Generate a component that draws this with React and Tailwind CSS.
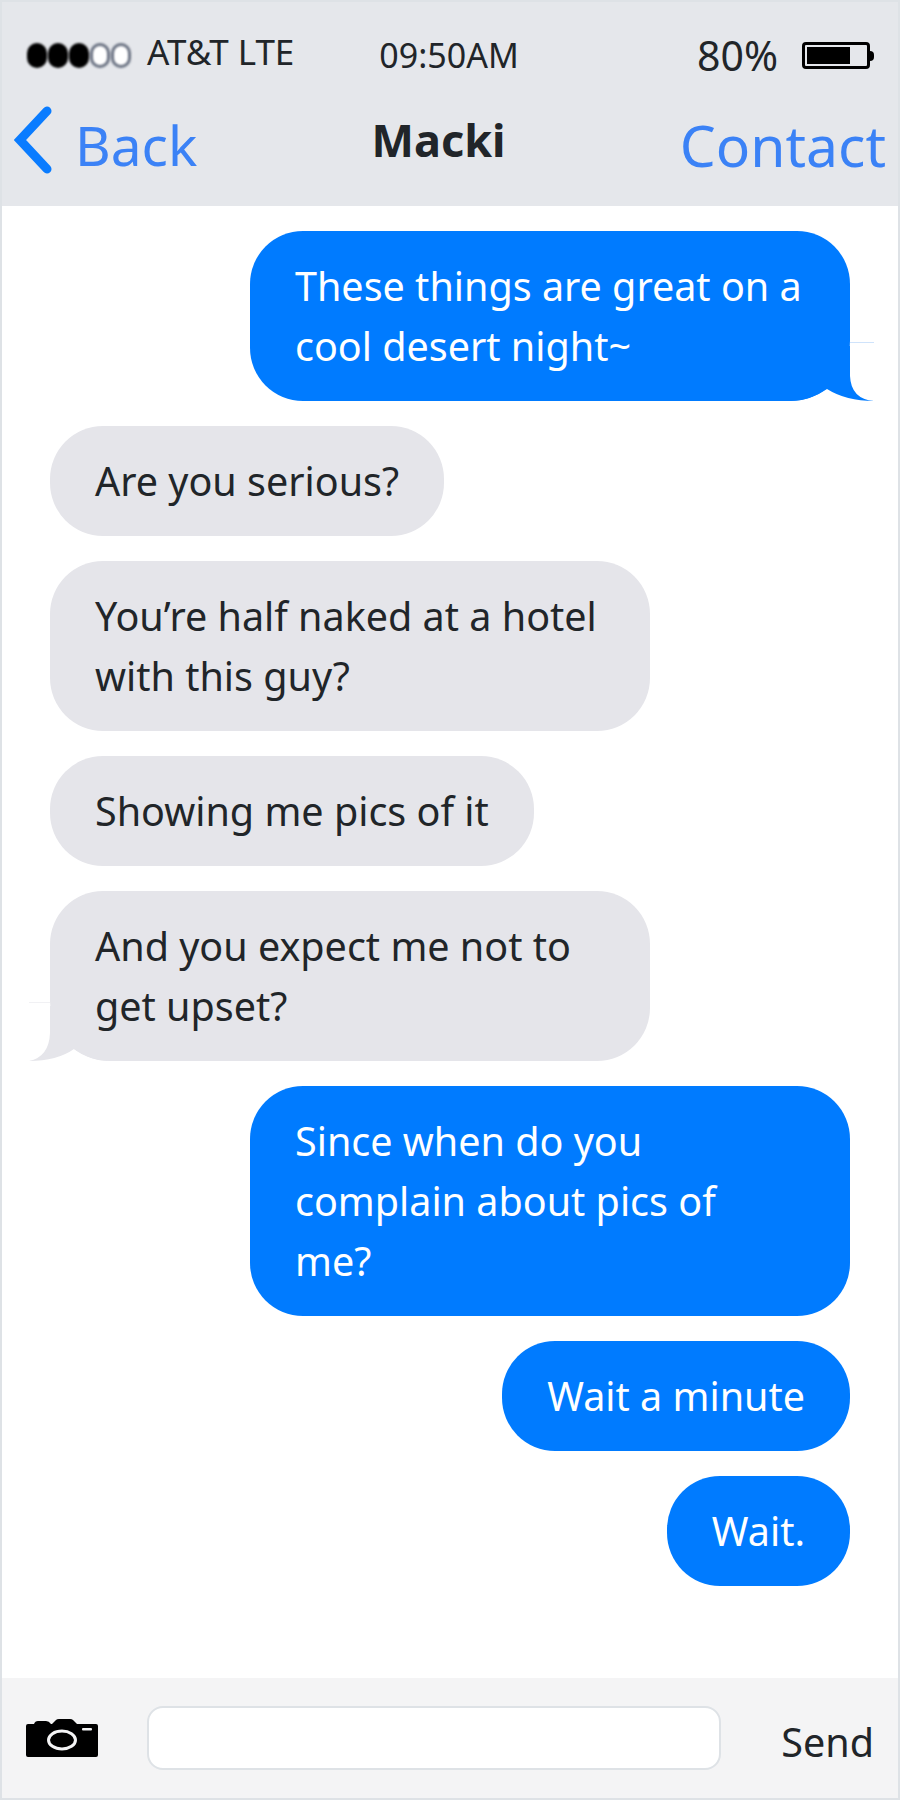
import React from 'react'

const messages = [
  { id: 1, text: ['These things are great on a', 'cool desert night~'], mine: true, tail: true, w: 'w-[600px]' },
  { id: 2, text: ['Are you serious?'], mine: false },
  { id: 3, text: ['You’re half naked at a hotel', 'with this guy?'], mine: false, w: 'w-[600px]' },
  { id: 4, text: ['Showing me pics of it'], mine: false },
  { id: 5, text: ['And you expect me not to', 'get upset?'], mine: false, tail: true, w: 'w-[600px]' },
  { id: 6, text: ['Since when do you', 'complain about pics of', 'me?'], mine: true, w: 'w-[600px]' },
  { id: 7, text: ['Wait a minute'], mine: true },
  { id: 8, text: ['Wait.'], mine: true },
]

function SignalDots() {
  return (
    <div className="flex gap-[1px] blur-[1px]">
      {[0, 1, 2, 3, 4].map((i) => (
        <span
          key={i}
          className={
            i < 3
              ? 'w-[20px] h-[25px] rounded-full bg-black'
              : 'w-[20px] h-[25px] rounded-full bg-white border-[3px] border-gray-500'
          }
        />
      ))}
    </div>
  )
}

function Battery() {
  return (
    <div className="flex items-center">
      <div className="w-[68px] h-[27px] rounded-[4px] border-[3px] border-black p-[2px]">
        <div className="h-full w-[43px] bg-black" />
      </div>
      <div className="w-[4px] h-[10px] bg-black rounded-r-full" />
    </div>
  )
}

function Camera() {
  return (
    <svg width="72" height="38" viewBox="0 0 72 38" className="block">
      <path
        d="M2 5 H8 Q9 2 12 2 H20 Q23 2 25 5 H26 L30 1 Q31 0 33 0 H44 Q46 0 47 1 L51 5 H70 Q72 5 72 7 V36 Q72 38 70 38 H2 Q0 38 0 36 V7 Q0 5 2 5 Z"
        fill="#000"
      />
      <ellipse cx="36" cy="21" rx="13.5" ry="9" fill="none" stroke="#f4f4f5" strokeWidth="3" />
      <rect x="56" y="9" width="10" height="2.5" rx="1" fill="#f4f4f5" />
    </svg>
  )
}

function Bubble({ msg }) {
  const corner = msg.tail ? (msg.mine ? 'rounded-br-[60px]' : 'rounded-bl-[60px]') : ''
  return (
    <div className={msg.mine ? 'flex justify-end' : 'flex justify-start'}>
      <div
        className={`relative rounded-[53px] ${corner} px-[45px] py-[25px] text-[39.5px] leading-[60px] ${msg.w || ''} ${
          msg.mine ? 'bg-[#007bff] text-white' : 'bg-[#e5e5ea] text-[#212529]'
        }`}
      >
        {/* speech bubble tails, painted under the text */}
        {msg.tail && msg.mine && (
          <svg width="84" height="60" viewBox="0 0 84 60" className="absolute right-[-24px] bottom-0">
            <path d="M0 5 H60 V35 Q61 58 84 60 Q56 60 37 48 Q20 60 0 60 Z" fill="#007bff" />
            <rect x="60" y="1" width="24" height="1" fill="#cfe3fb" />
          </svg>
        )}
        {msg.tail && !msg.mine && (
          <svg width="81" height="60" viewBox="0 0 81 60" className="absolute left-[-21px] bottom-0">
            <path d="M81 5 H21 V32 Q20 56 0 60 Q28 60 45 48 Q62 60 81 60 Z" fill="#e5e5ea" />
            <rect x="0" y="1" width="21" height="1" fill="#f1f1f4" />
          </svg>
        )}
        {msg.text.map((line) => (
          <div key={line} className="relative whitespace-nowrap">{line}</div>
        ))}
      </div>
    </div>
  )
}

export default function App() {
  return (
    <div className="w-[900px] h-[1800px] flex flex-col border-2 border-[#dee2e6] font-['Noto_Sans',sans-serif] text-[#212529] bg-white">
      {/* Status bar and title */}
      <header className="h-[204px] shrink-0 bg-[#e5e7eb] flex flex-col">
        <div className="h-[100px] flex items-center pt-[7px] pl-[25px] pr-[24px]">
          <SignalDots />
          <span className="ml-[16px] text-[35px] -mt-[6px]">AT&amp;T LTE</span>
          <span className="ml-[85px] text-[34px]">09:50AM</span>
          <span className="ml-auto text-[41px]">80%</span>
          <div className="ml-[24px]"><Battery /></div>
        </div>
        <div className="flex-1 flex items-start justify-between px-[12px] text-[#3b82f6]">
          <div className="flex items-start">
            <svg width="40" height="74" viewBox="0 0 40 74">
              <path d="M33 9 L6 38 L33 67" fill="none" stroke="#0a7cff" strokeWidth="9" strokeLinecap="round" />
            </svg>
            <span className="ml-[21px] pt-[6px] text-[55px] leading-[74px]">Back</span>
          </div>
          <span className="pt-[6px] text-[45px] leading-[64px] font-bold text-[#212529]">Macki</span>
          <span className="pt-[6px] text-[57px] leading-[74px]">Contact</span>
        </div>
      </header>

      {/* Conversation */}
      <main className="flex-1 flex flex-col gap-[25px] pt-[25px] px-[48px]">
        {messages.map((msg) => (
          <Bubble key={msg.id} msg={msg} />
        ))}
      </main>

      {/* Composer */}
      <footer className="h-[120px] shrink-0 bg-[#f4f4f5] flex items-center px-[24px]">
        <Camera />
        <div className="ml-[49px] w-[574px] h-[64px] rounded-[16px] bg-white border-2 border-[#dee2e6]" />
        <span className="ml-auto pt-[10px] text-[39.5px]">Send</span>
      </footer>
    </div>
  )
}
